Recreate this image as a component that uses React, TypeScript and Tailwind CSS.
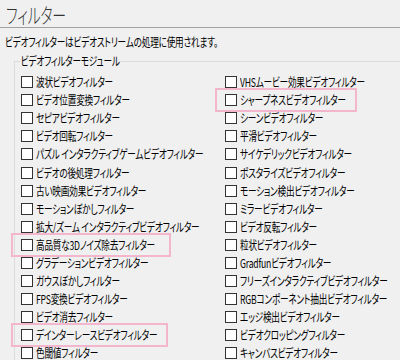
import React from 'react'

const leftItems = [
  '波状ビデオフィルター',
  'ビデオ位置変換フィルター',
  'セピアビデオフィルター',
  'ビデオ回転フィルター',
  'パズル インタラクティブゲームビデオフィルター',
  'ビデオの後処理フィルター',
  '古い映画効果ビデオフィルター',
  'モーションぼかしフィルター',
  '拡大/ズーム インタラクティブビデオフィルター',
  '高品質な3Dノイズ除去フィルター',
  'グラデーションビデオフィルター',
  'ガウスぼかしフィルター',
  'FPS変換ビデオフィルター',
  'ビデオ消去フィルター',
  'デインターレースビデオフィルター',
  '色閾値フィルター',
]

const rightItems = [
  'VHSムービー効果ビデオフィルター',
  'シャープネスビデオフィルター',
  'シーンビデオフィルター',
  '平滑ビデオフィルター',
  'サイケデリックビデオフィルター',
  'ポスタライズビデオフィルター',
  'モーション検出ビデオフィルター',
  'ミラービデオフィルター',
  'ビデオ反転フィルター',
  '粒状ビデオフィルター',
  'Gradfunビデオフィルター',
  'フリーズインタラクティブビデオフィルター',
  'RGBコンポーネント抽出ビデオフィルター',
  'エッジ検出ビデオフィルター',
  'ビデオクロッピングフィルター',
  'キャンバスビデオフィルター',
]

// marked rows: label -> pink frame width
const marked: Record<string, string> = {
  'シャープネスビデオフィルター': 'w-[142px]',
  '高品質な3Dノイズ除去フィルター': 'w-[160px]',
  'デインターレースビデオフィルター': 'w-[157px]',
}

// the UI font is a narrow one, squeeze the CJK glyphs to its width
function T({ children }: { children: React.ReactNode }) {
  return <span className="inline-block origin-left scale-x-[0.72] whitespace-nowrap">{children}</span>
}

function Item({ label }: { label: string }) {
  const mark = marked[label]
  return (
    <div className="relative flex items-center gap-[3px] pl-[6px] min-w-0">
      {mark && (
        <span className={`absolute left-[-4px] top-[-3px] h-[24px] border-2 border-[#f4b6cc] ${mark}`} />
      )}
      <span className="w-[12px] h-[12px] shrink-0 border border-[#333] bg-white" />
      <T>{label}</T>
    </div>
  )
}

export default function App() {
  const rows = leftItems.flatMap((l, i) => [l, rightItems[i]])
  return (
    <div
      className="w-[400px] h-[360px] overflow-hidden bg-[#f0f0f0] text-[#000] text-[12px] [font-feature-settings:'palt'] tracking-[-0.3px]"
      style={{ fontFamily: '"Noto Sans CJK JP", "Noto Sans", sans-serif' }}
    >
      <div className="h-[27px] flex items-center pl-[6px] text-[21px] leading-[24px] font-light text-[#333]">
        <span className="inline-block origin-left scale-x-[0.66]">フィルター</span>
      </div>
      <div className="h-px bg-[#a0a0a0]" />
      <div className="h-[33px] flex items-center pl-[5px] pb-[6px]">
        <T>ビデオフィルターはビデオストリームの処理に使用されます。</T>
      </div>
      <div className="relative ml-[14px] border-t border-l border-[#dcdcdc] pt-[11px]">
        <span className="absolute left-[5px] top-[-10px] leading-[18px]">
          <span className="inline-block origin-left scale-x-[0.72] bg-[#f0f0f0] px-px whitespace-nowrap">ビデオフィルターモジュール</span>
        </span>
        <div className="grid grid-cols-[204px_1fr] auto-rows-[18.1px]">
          {rows.map((r, i) => (
            <Item key={i} label={r} />
          ))}
        </div>
      </div>
    </div>
  )
}
